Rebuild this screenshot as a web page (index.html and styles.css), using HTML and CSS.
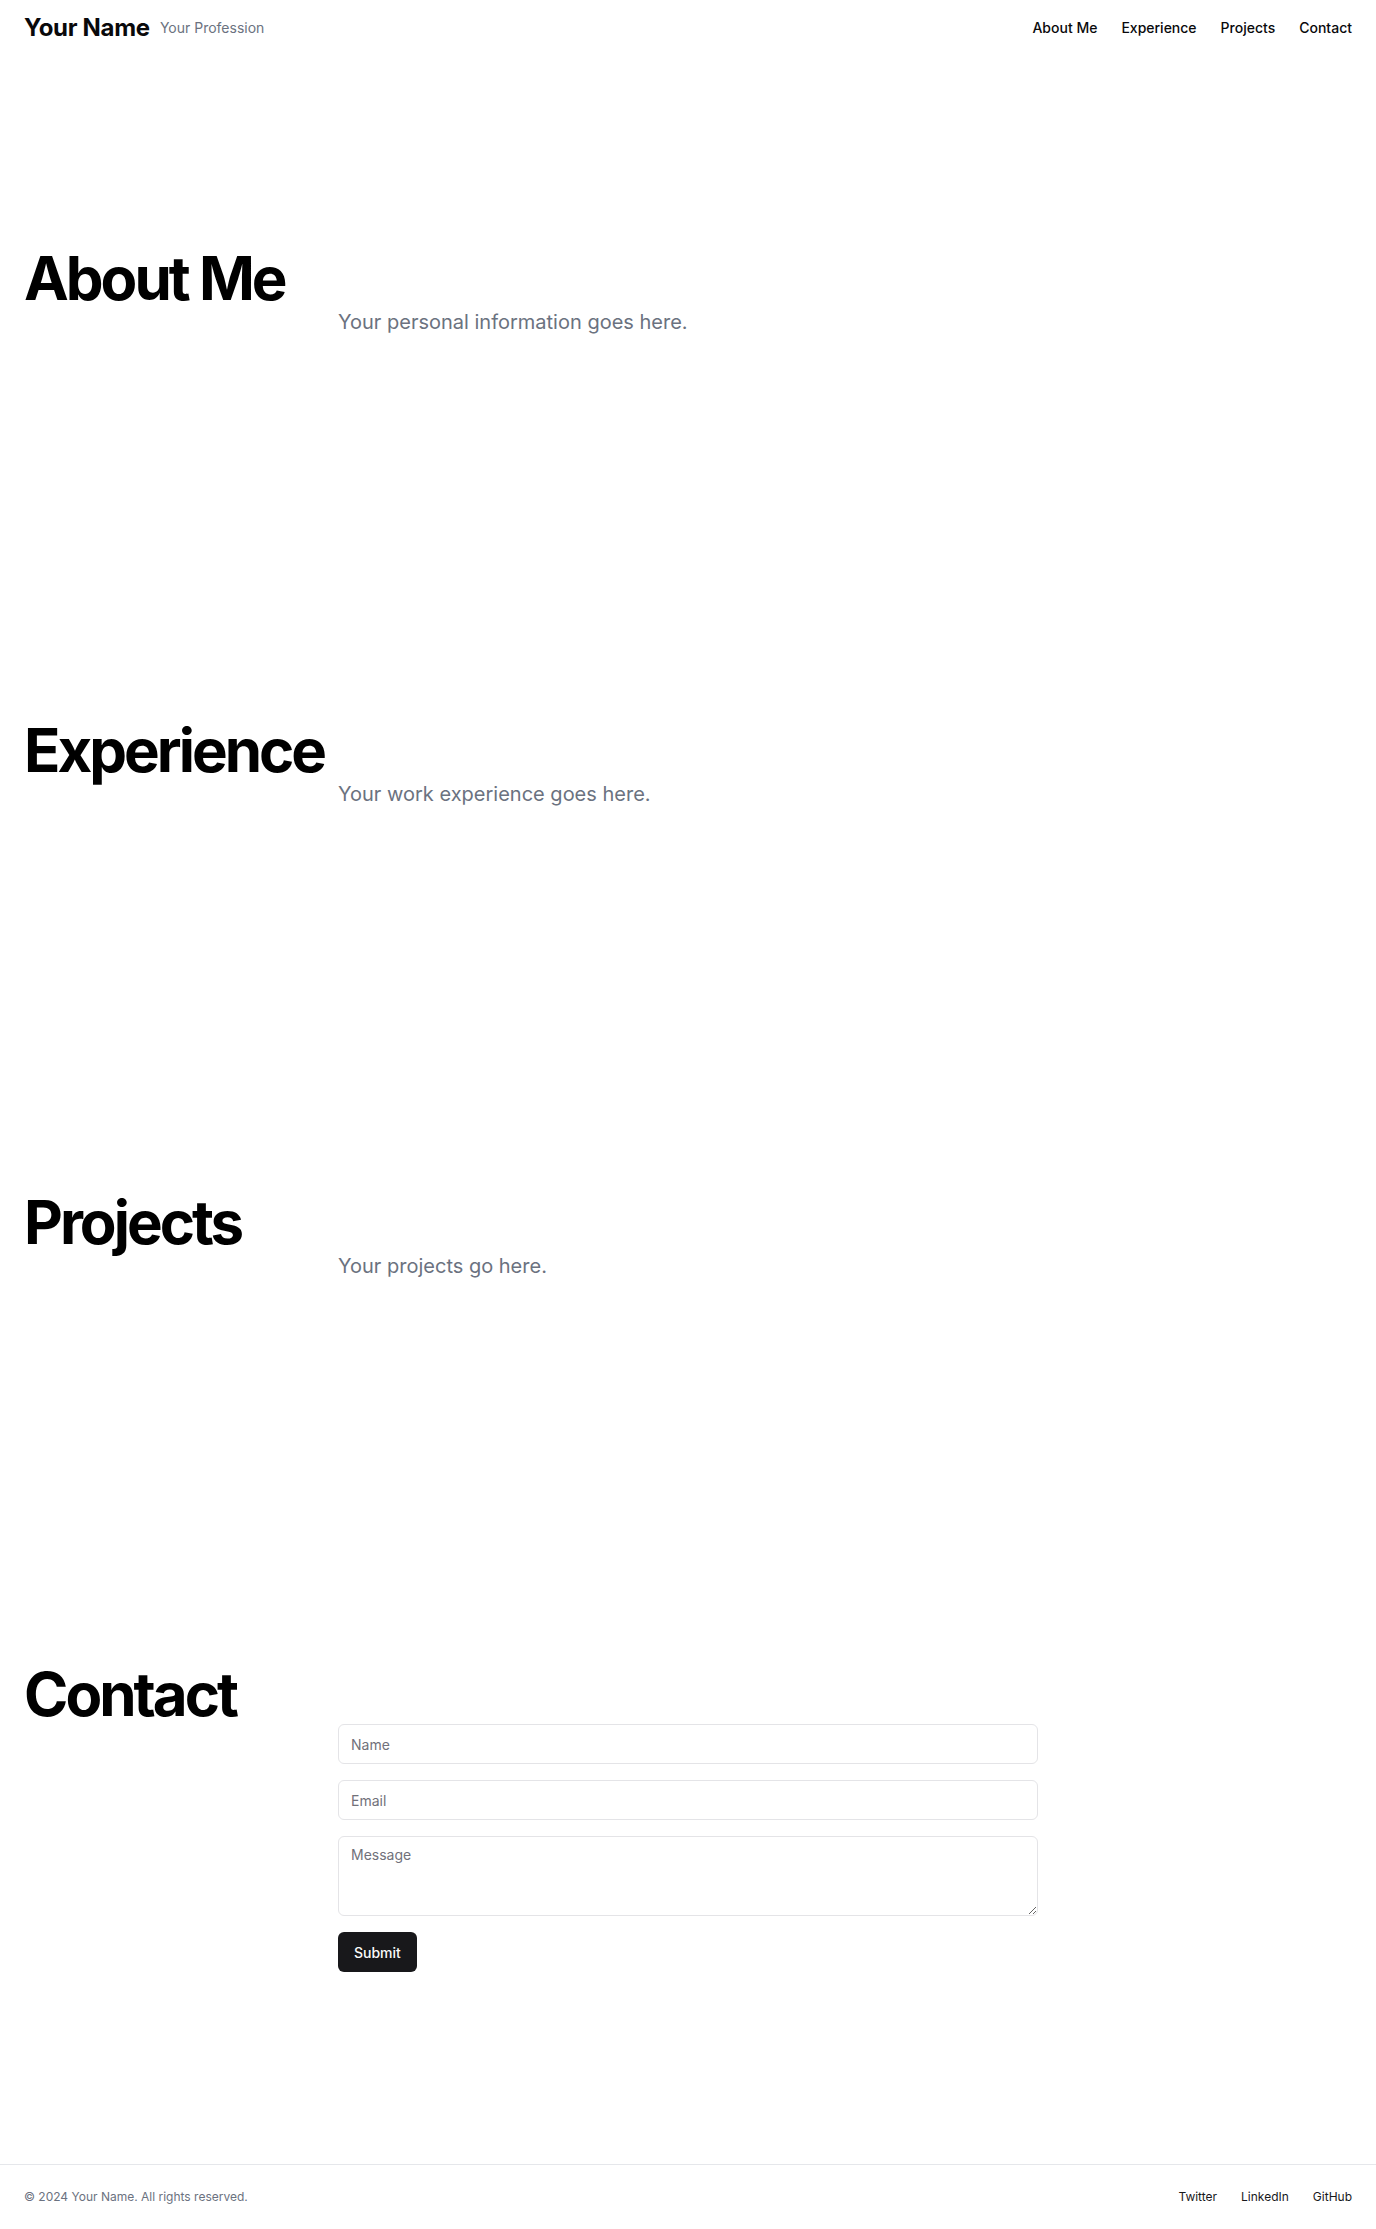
FILE: index.html
```html
<!DOCTYPE html>
<html lang="en">
<head>
<meta charset="utf-8">
<title>Your Name</title>
<link rel="stylesheet" href="styles.css">
</head>
<body>
<header class="site-header">
  <div class="brand">
    <span class="brand-name">Your Name</span>
    <span class="brand-role">Your Profession</span>
  </div>
  <nav class="nav">
    <a href="#about">About Me</a>
    <a href="#experience">Experience</a>
    <a href="#projects">Projects</a>
    <a href="#contact">Contact</a>
  </nav>
</header>
<main>
  <section class="section" id="about">
    <h2 class="section-title">About Me</h2>
    <div class="section-body"><p class="lead">Your personal information goes here.</p></div>
  </section>
  <section class="section" id="experience">
    <h2 class="section-title">Experience</h2>
    <div class="section-body"><p class="lead">Your work experience goes here.</p></div>
  </section>
  <section class="section" id="projects">
    <h2 class="section-title">Projects</h2>
    <div class="section-body"><p class="lead">Your projects go here.</p></div>
  </section>
  <section class="section" id="contact">
    <h2 class="section-title">Contact</h2>
    <div class="section-body">
      <form class="contact-form">
        <input class="field" type="text" placeholder="Name">
        <input class="field" type="email" placeholder="Email">
        <textarea class="field field-area" placeholder="Message"></textarea>
        <button class="submit" type="button">Submit</button>
      </form>
    </div>
  </section>
</main>
<footer class="site-footer">
  <p class="copyright">© 2024 Your Name. All rights reserved.</p>
  <nav class="footer-links">
    <a href="#">Twitter</a>
    <a href="#">LinkedIn</a>
    <a href="#">GitHub</a>
  </nav>
</footer>
</body>
</html>
```
FILE: styles.css
```css
* { box-sizing: border-box; }
html, body { margin: 0; padding: 0; background: #fff; }
body {
  font-family: Inter, "Noto Sans", "Liberation Sans", sans-serif;
  color: #09090b;
}
a { color: inherit; text-decoration: none; }

.site-header {
  height: 56px;
  padding: 0 24px;
  display: flex;
  align-items: center;
  justify-content: space-between;
}
.brand { display: flex; align-items: center; gap: 10px; }
.brand-name {
  font-size: 24px;
  line-height: 32px;
  font-weight: 700;
  letter-spacing: -0.012em;
  color: #09090b;
}
.brand-role { font-size: 14px; line-height: 20px; color: #6b7280; }
.nav { display: flex; gap: 24px; }
.nav a { font-size: 14px; line-height: 20px; font-weight: 500; color: #09090b; }

.section {
  padding: 192px 24px;
  display: grid;
  grid-template-columns: 314px 1fr;
}
.section-title {
  grid-column: 1 / -1;
  margin: 0;
  font-size: 60px;
  line-height: 60px;
  font-weight: 700;
  letter-spacing: -0.05em;
  color: #000;
}
.section-body { grid-column: 2; }
.lead { margin: 0; font-size: 20px; line-height: 28px; color: #6b7280; }

.contact-form {
  max-width: 700px;
  display: flex;
  flex-direction: column;
  gap: 16px;
}
.field {
  display: block;
  width: 100%;
  height: 40px;
  padding: 8px 12px;
  border: 1px solid #e4e4e7;
  border-radius: 6px;
  font-family: inherit;
  font-size: 14px;
  line-height: 20px;
  color: #09090b;
  background: #fff;
  outline: none;
}
.field::placeholder { color: #71717a; }
.field-area { height: 80px; min-height: 80px; }
.submit {
  align-self: flex-start;
  height: 40px;
  padding: 0 16px;
  border: 0;
  border-radius: 6px;
  background: #18181b;
  color: #fafafa;
  font-family: inherit;
  font-size: 14px;
  font-weight: 500;
}

.site-footer {
  border-top: 1px solid #e5e7eb;
  padding: 24px;
  display: flex;
  align-items: center;
  justify-content: space-between;
}
.copyright { margin: 0; font-size: 12px; line-height: 16px; color: #6b7280; }
.footer-links { display: flex; gap: 24px; }
.footer-links a { font-size: 12px; line-height: 16px; color: #18181b; }
```
